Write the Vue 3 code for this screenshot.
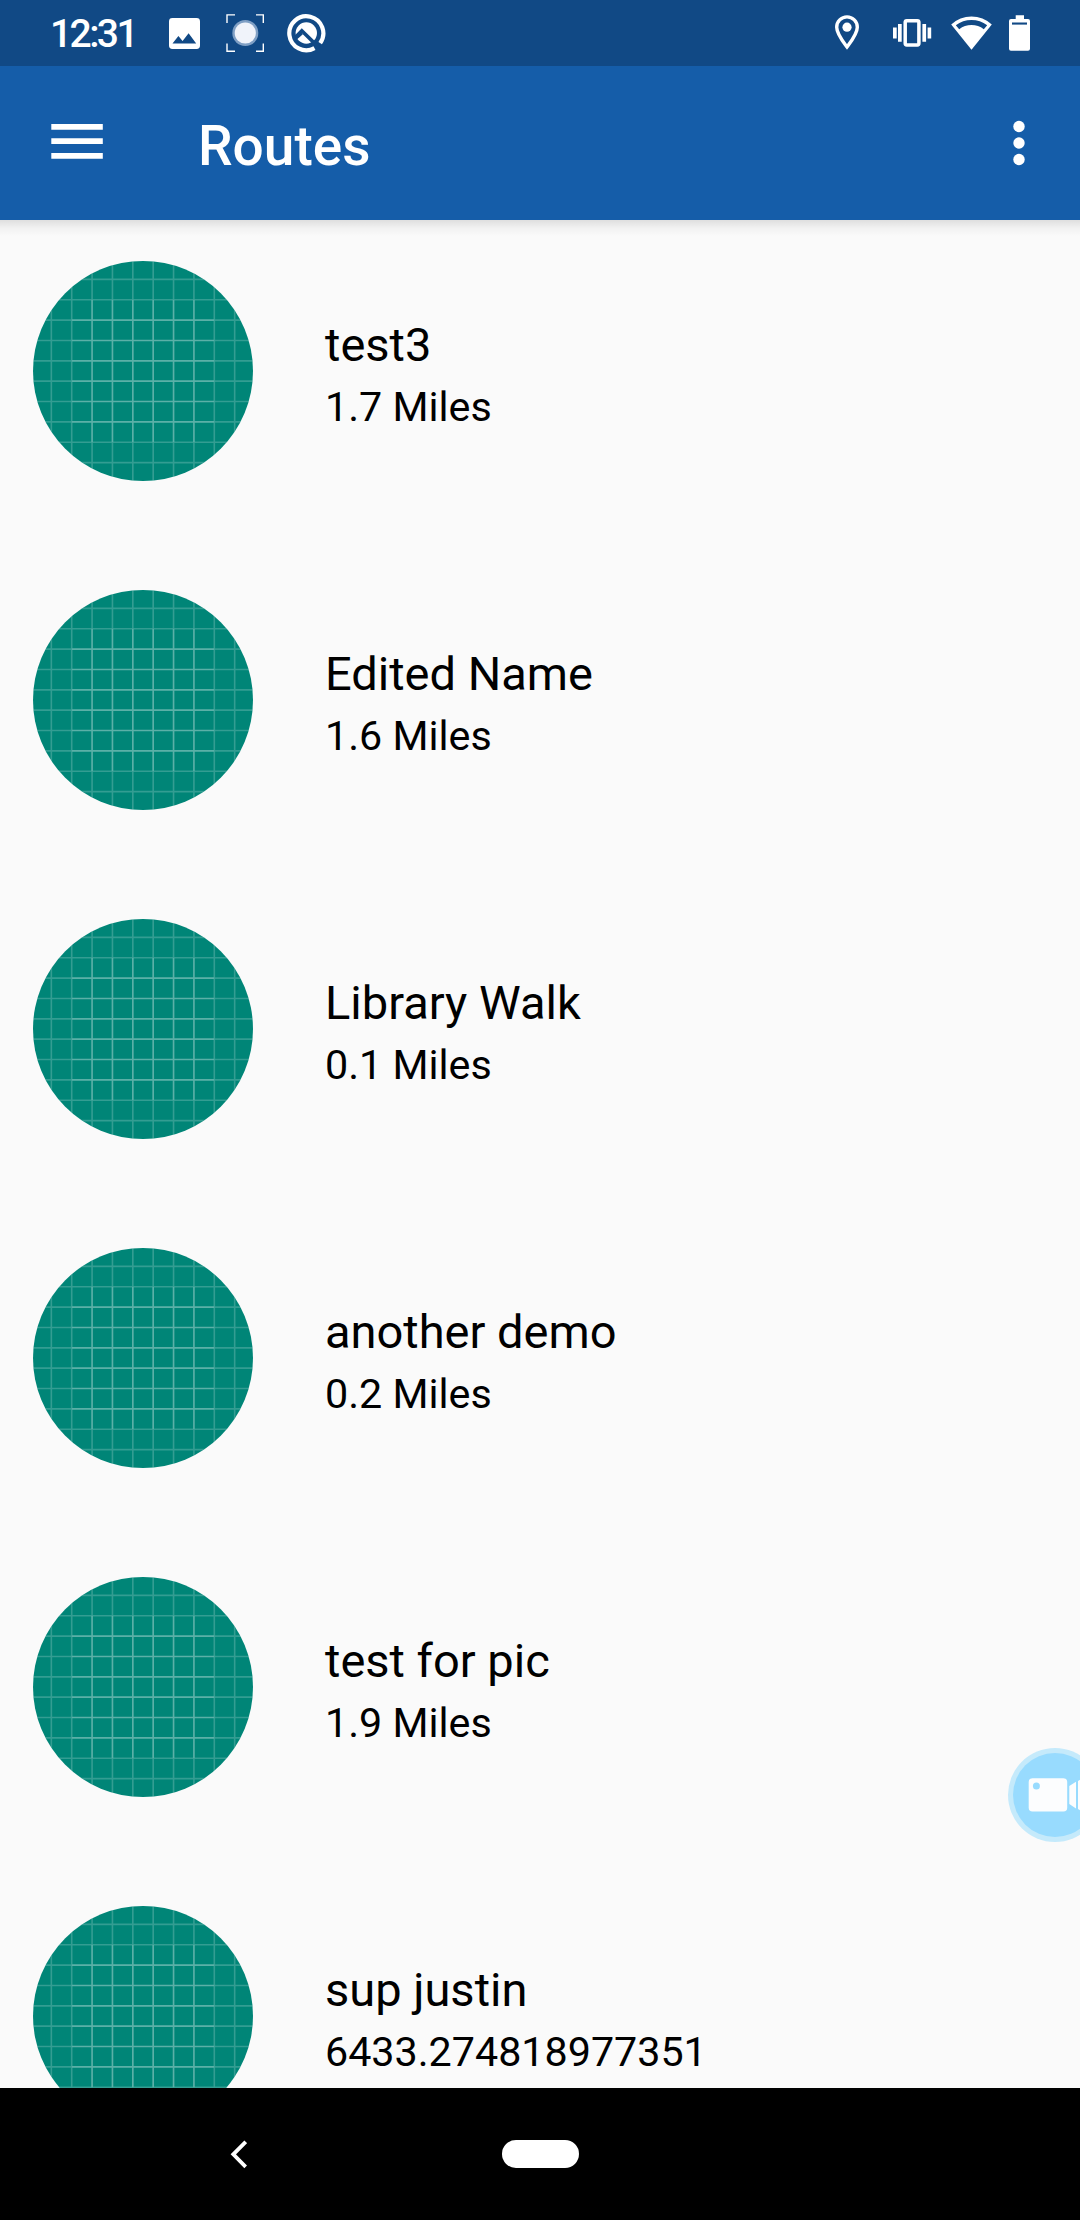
<script setup>
const routes = [
  { name: 'test3', distance: '1.7 Miles' },
  { name: 'Edited Name', distance: '1.6 Miles' },
  { name: 'Library Walk', distance: '0.1 Miles' },
  { name: 'another demo', distance: '0.2 Miles' },
  { name: 'test for pic', distance: '1.9 Miles' },
  { name: 'sup justin', distance: '6433.274818977351' },
]

const outer = [9, 19, 29, 39, 49, 59, 69, 79, 89, 99]
const inner = [29, 39, 49, 59, 69, 79]
const gridPath =
  outer.map((n) => `M${n},0V108M0,${n}H108`).join('')
const innerPath =
  inner.map((n) => `M${n},19V89M19,${n}H89`).join('')
</script>

<template>
  <div class="screen">
    <header class="status">
      <div class="status-left">
        <span class="clock">12:31</span>
        <svg class="i-image" width="32" height="66" viewBox="169 0 32 66">
          <path fill="#fff" fill-rule="evenodd" d="M172.4 18H196.6Q200 18 200 21.4V45.6Q200 49 196.6 49H172.4Q169 49 169 45.6V21.4Q169 18 172.4 18ZM172.5 43.5H196.2L188.6 33.3L182.6 41.1L178.4 36Z" />
        </svg>
        <svg class="i-focus" width="38" height="66" viewBox="226 0 38 66">
          <path fill="none" stroke="#fff" stroke-width="1.4" d="M227 23V14.9H235M256 14.9H263.3V23M263.3 43.5V51.3H256M235 51.3H227V43.5" />
          <circle cx="245.3" cy="33" r="13" fill="#7f9fc4" />
          <circle cx="245.3" cy="33" r="10.6" fill="#f0f3fa" />
        </svg>
        <svg class="i-q" width="40" height="66" viewBox="286 0 40 66">
          <path fill="none" stroke="#fff" stroke-width="4.2" d="M314.5 48.2A17 17 0 1 1 320.2 43.1" />
          <circle cx="306.3" cy="33" r="10.7" fill="#fff" />
          <path fill="none" stroke="#114985" stroke-width="3.6" d="M295.5 37.2L301.8 30.8L319 47.6" />
          <path fill="none" stroke="#114985" stroke-width="2" d="M296.5 38.5L302.2 33.5" />
        </svg>
      </div>
      <div class="status-right">
        <svg width="28" height="66" viewBox="833 0 28 66">
          <path fill="none" stroke="#fff" stroke-width="3.4" stroke-linejoin="miter" d="M847 47C843.6 42.4 836.7 33.8 836.7 27.2A10.3 10.3 0 0 1 857.3 27.2C857.3 33.8 850.4 42.4 847 47Z" />
          <circle cx="847" cy="27.2" r="4.6" fill="#fff" />
        </svg>
        <svg class="i-vib" width="40" height="66" viewBox="892 0 40 66">
          <rect x="905.2" y="20.7" width="13.7" height="24.2" rx="1.6" fill="none" stroke="#fff" stroke-width="3.5" />
          <path fill="#fff" d="M898 24H901.7V41.7H898ZM893 27.5H896.7V38.5H893ZM922.4 24H926.1V41.7H922.4ZM927.6 27.5H931.2V38.5H927.6Z" />
        </svg>
        <svg class="i-wifi" width="42" height="66" viewBox="951 0 42 66">
          <path fill="#fff" d="M951.2 24.5A29.5 29.5 0 0 1 991.8 24.5L971.5 49.8Z" />
          <path fill="#114985" d="M955.8 25.2A26 26 0 0 1 987.2 25.2L983.8 29.2A20.5 20.5 0 0 0 959.2 29.2Z" />
        </svg>
        <svg class="i-bat" width="22" height="66" viewBox="1009 0 22 66">
          <path fill="#fff" d="M1015.7 19V15.3H1024V19H1028Q1030 19 1030 21V48.7Q1030 50.7 1028 50.7H1011Q1009 50.7 1009 48.7V21Q1009 19 1011 19Z" />
          <rect x="1012" y="22.5" width="15" height="2.1" fill="#114985" />
        </svg>
      </div>
    </header>

    <div class="appbar">
      <svg width="52" height="36" viewBox="51 124 52 36">
        <path fill="#fff" d="M51.3 124H102.8V129.8H51.3ZM51.3 138.2H102.8V144H51.3ZM51.3 153H102.8V158.8H51.3Z" />
      </svg>
      <h1>Routes</h1>
      <svg class="more" width="12" height="46" viewBox="1013 120 12 46">
        <g fill="#fff">
          <circle cx="1019" cy="126.5" r="5.7" />
          <circle cx="1019" cy="143" r="5.7" />
          <circle cx="1019" cy="159.5" r="5.7" />
        </g>
      </svg>
    </div>

    <main class="list">
      <div v-for="r in routes" :key="r.name" class="row">
        <svg class="thumb" width="220" height="220" viewBox="0 0 108 108">
          <rect width="108" height="108" fill="#008577" />
          <path :d="gridPath" stroke="#fff" stroke-opacity=".2" stroke-width=".8" />
          <path :d="innerPath" stroke="#fff" stroke-opacity=".2" stroke-width=".8" />
        </svg>
        <div class="text">
          <div class="name">{{ r.name }}</div>
          <div class="dist">{{ r.distance }}</div>
        </div>
      </div>
    </main>

    <nav class="nav">
      <svg width="17" height="30" viewBox="230 2139 17 30">
        <path fill="none" stroke="#fff" stroke-width="3.8" d="M245.7 2141.8L233.3 2154.3L245.7 2166.8" />
      </svg>
      <span class="pill"></span>
    </nav>

    <svg class="recorder" width="72" height="94" viewBox="1008 1748 72 94">
      <circle cx="1055" cy="1795" r="47" fill="#c5eafb" />
      <circle cx="1055" cy="1795" r="42" fill="#98dbfe" />
      <rect x="1028.7" y="1778.2" width="38.5" height="33.3" rx="3.8" fill="#fcfdfe" />
      <circle cx="1036.4" cy="1786.1" r="3.5" fill="#98dbfe" />
      <path fill="#fcfdfe" d="M1069.3 1786L1076 1781.8V1808.5L1069.3 1804ZM1078 1781L1080 1779.8V1810.2L1078 1809Z" />
    </svg>
  </div>
</template>

<style>
body { margin: 0; }
</style>

<style scoped>
.screen {
  position: relative;
  display: flex;
  flex-direction: column;
  width: 1080px;
  height: 2220px;
  overflow: hidden;
  background: #fafafa;
  font-family: Roboto, "Liberation Sans", sans-serif;
  color: #000;
}
svg { display: block; flex: none; }
.status {
  flex: none;
  display: flex;
  justify-content: space-between;
  height: 66px;
  background: #114985;
  padding: 0 49px 0 50px;
}
.status-left, .status-right { display: flex; }
.clock {
  width: 119px;
  line-height: 68px;
  font-size: 39px;
  font-weight: 500;
  letter-spacing: -2.6px;
  color: #fff;
}
.i-focus { margin-left: 25px; }
.i-q { margin-left: 22px; }
.i-vib { margin-left: 31px; }
.i-wifi { margin-left: 19px; }
.i-bat { margin-left: 16px; }
.appbar {
  flex: none;
  position: relative;
  z-index: 1;
  display: flex;
  align-items: center;
  box-sizing: border-box;
  height: 154px;
  padding: 0 55px 2px 51px;
  background: #155da9;
}
.appbar::after {
  content: "";
  position: absolute;
  left: 0;
  right: 0;
  top: 100%;
  height: 16px;
  background: linear-gradient(rgba(0, 0, 0, .11), rgba(0, 0, 0, .035) 50%, transparent);
}
h1 {
  margin: 8px 0 0 95px;
  font-size: 55px;
  line-height: 64px;
  font-weight: 500;
  color: #fff;
}
.more { margin: 2px 0 0 auto; }
.list {
  flex: 1;
  min-height: 0;
  overflow: hidden;
  padding: 41px 33px 0;
}
.row {
  display: flex;
  height: 220px;
  margin-bottom: 109px;
}
.thumb { border-radius: 50%; }
.text {
  margin: 54px 0 0 72px;
  white-space: nowrap;
}
.name { font-size: 47px; line-height: 60px; }
.dist { font-size: 41.25px; line-height: 60px; margin-top: 2px; }
.nav {
  flex: none;
  display: flex;
  align-items: center;
  height: 132px;
  padding-left: 230px;
  background: #000;
}
.pill {
  width: 77px;
  height: 28px;
  margin-left: 255px;
  border-radius: 14px;
  background: #fff;
}
.recorder {
  position: absolute;
  right: 0;
  top: 1748px;
}
</style>
